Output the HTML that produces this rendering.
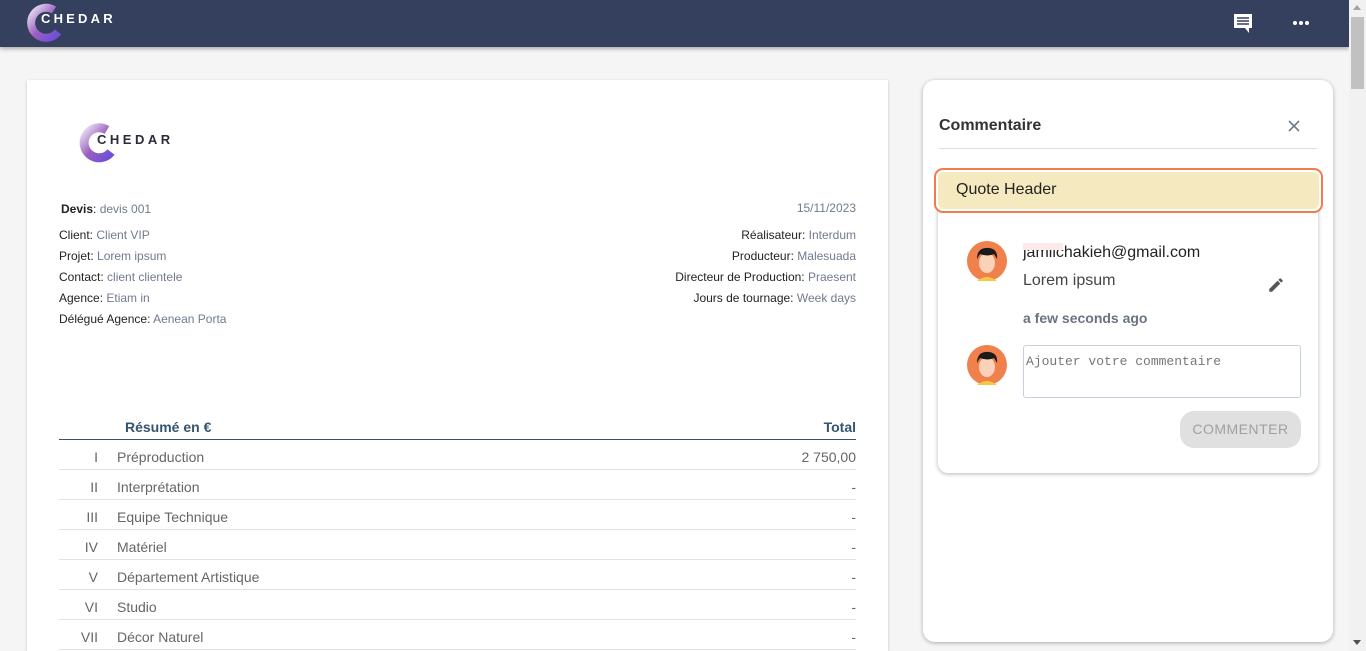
<!DOCTYPE html>
<html style="width:1366px;height:651px;overflow:hidden"><head><meta charset="utf-8"><style>
*{margin:0;padding:0;box-sizing:border-box}
body{width:1366px;height:651px;overflow:hidden;background:#f5f5f5;font-family:"Liberation Sans",Roboto,sans-serif;position:relative}
.hdr{position:absolute;left:0;top:0;width:1349px;height:47px;background:#353f5e;box-shadow:0 2px 4px rgba(0,0,0,.3)}
.sb{position:absolute;right:0;top:0;width:17px;height:651px;background:#f1f1f1}
.sb .th{position:absolute;left:2px;top:17px;width:13px;height:72px;background:#c1c1c1}
.abs{position:absolute}
.doc{position:absolute;left:27px;top:80px;width:861px;height:571px;background:#fff;box-shadow:0 1px 3px rgba(0,0,0,.2);overflow:hidden}
.t{position:absolute;font-size:12px;color:#222;white-space:nowrap}
.t span{color:#707b8c}
.r{text-align:right}
.row{position:absolute;left:32px;width:797px;height:30px;border-bottom:1px solid #e2e2e2;font-size:14px;color:#666}
.row .n{position:absolute;right:758px;top:9px}
.row .l{position:absolute;left:58px;top:9px}
.row .v{position:absolute;right:0;top:9px}
.panel{position:absolute;left:923px;top:80px;width:410px;height:562px;background:#fff;border-radius:12px;box-shadow:0 1px 4px rgba(0,0,0,.3)}
</style></head><body>
<div class="hdr">
<svg class="abs" style="left:24px;top:2px" width="44" height="42" viewBox="0 0 44 42"><defs><linearGradient id="g" x1="0" y1="0" x2="1" y2="1"><stop offset="0" stop-color="#e8e4f2"/><stop offset=".5" stop-color="#9b5fc0"/><stop offset="1" stop-color="#6a4fd8"/></linearGradient></defs><path d="M30 8 A15 15 0 1 0 34 30" fill="none" stroke="url(#g)" stroke-width="8"/></svg>
<div class="abs" style="left:41px;top:11px;color:#fff;font-weight:bold;font-size:13px;letter-spacing:3.2px">CHEDAR</div>
<svg class="abs" style="left:1233px;top:14px" width="20" height="20" viewBox="0 0 20 20"><path d="M1 0h18v14h-3v5l-4-5H1z" fill="#fff"/><path d="M4 4h12M4 7h12M4 10h12" stroke="#353f5e" stroke-width="1.6"/></svg>
<div class="abs" style="left:1293px;top:21px;width:16px;display:flex;justify-content:space-between"><i style="width:4px;height:4px;border-radius:2px;background:#fff"></i><i style="width:4px;height:4px;border-radius:2px;background:#fff"></i><i style="width:4px;height:4px;border-radius:2px;background:#fff"></i></div>
</div>
<div class="sb"><div class="abs" style="left:4px;top:5px;border:4px solid transparent;border-bottom:5px solid #a3a3a3;border-top:0"></div><div class="th"></div><div class="abs" style="left:4px;top:640px;border:4px solid transparent;border-top:5px solid #505050;border-bottom:0"></div></div>

<div class="doc">
<svg class="abs" style="left:50px;top:41px" width="44" height="44" viewBox="0 0 44 42"><path d="M30 8 A15 15 0 1 0 34 30" fill="none" stroke="url(#g)" stroke-width="9"/></svg>
<div class="abs" style="left:70px;top:52px;color:#2a2a3a;font-weight:bold;font-size:13px;letter-spacing:3.5px">CHEDAR</div>
<div class="t" style="left:34px;top:122px"><b>Devis</b>: <span>devis 001</span></div>
<div class="t" style="left:32px;top:148px">Client: <span>Client VIP</span></div>
<div class="t" style="left:32px;top:169px">Projet: <span>Lorem ipsum</span></div>
<div class="t" style="left:32px;top:190px">Contact: <span>client clientele</span></div>
<div class="t" style="left:32px;top:211px">Agence: <span>Etiam in</span></div>
<div class="t" style="left:32px;top:232px">Délégué Agence: <span>Aenean Porta</span></div>
<div class="t r" style="right:32px;top:121px"><span>15/11/2023</span></div>
<div class="t r" style="right:32px;top:148px">Réalisateur: <span>Interdum</span></div>
<div class="t r" style="right:32px;top:169px">Producteur: <span>Malesuada</span></div>
<div class="t r" style="right:32px;top:190px">Directeur de Production: <span>Praesent</span></div>
<div class="t r" style="right:32px;top:211px">Jours de tournage: <span>Week days</span></div>
<div class="abs" style="left:32px;top:330px;width:797px;height:30px;border-bottom:1px solid #35546e;font-size:14px;font-weight:bold;color:#35546e"><span class="abs" style="left:66px;top:9px">Résumé en €</span><span class="abs" style="right:0;top:9px">Total</span></div>
<div class="row" style="top:360px"><span class="n">I</span><span class="l">Préproduction</span><span class="v">2 750,00</span></div>
<div class="row" style="top:390px"><span class="n">II</span><span class="l">Interprétation</span><span class="v">-</span></div>
<div class="row" style="top:420px"><span class="n">III</span><span class="l">Equipe Technique</span><span class="v">-</span></div>
<div class="row" style="top:450px"><span class="n">IV</span><span class="l">Matériel</span><span class="v">-</span></div>
<div class="row" style="top:480px"><span class="n">V</span><span class="l">Département Artistique</span><span class="v">-</span></div>
<div class="row" style="top:510px"><span class="n">VI</span><span class="l">Studio</span><span class="v">-</span></div>
<div class="row" style="top:540px"><span class="n">VII</span><span class="l">Décor Naturel</span><span class="v">-</span></div>
</div>

<div class="panel">
<div class="abs" style="left:16px;top:37px;font-size:16px;font-weight:bold;color:#333">Commentaire</div>
<svg class="abs" style="left:365px;top:40px" width="12" height="12" viewBox="0 0 12 12"><path d="M1 1L11 11M11 1L1 11" stroke="#6b7a8f" stroke-width="1.6"/></svg>
<div class="abs" style="left:16px;top:68px;width:378px;height:1px;background:#ddd"></div>
<div class="abs" style="left:15px;top:104px;width:380px;height:289px;background:#fff;border-radius:10px;box-shadow:0 1px 4px rgba(0,0,0,.3)"></div>
<div class="abs" style="left:11px;top:88px;width:389px;height:45px;border:2.5px solid #f47a4a;border-radius:9px;background:#fff;padding:2px"><div style="background:#f5e9c0;height:100%;border-radius:6px;font-size:16px;color:#222;padding:9px 0 0 18px">Quote Header</div></div>
<svg class="abs" style="left:44px;top:161px" width="40" height="40" viewBox="0 0 40 40"><circle cx="20" cy="20" r="20" fill="#f0804c"/><path d="M10 40q10-8 20 0" fill="#f5c842"/><ellipse cx="20" cy="22" rx="8" ry="10" fill="#f9d2b8"/><path d="M10 18q0-12 12-11 9 1 8 11l-3-5q-6 3-14 0z" fill="#1a1a1a"/></svg>
<svg class="abs" style="left:44px;top:265px" width="40" height="40" viewBox="0 0 40 40"><circle cx="20" cy="20" r="20" fill="#f0804c"/><path d="M10 40q10-8 20 0" fill="#f5c842"/><ellipse cx="20" cy="22" rx="8" ry="10" fill="#f9d2b8"/><path d="M10 18q0-12 12-11 9 1 8 11l-3-5q-6 3-14 0z" fill="#1a1a1a"/></svg>
<div class="abs" style="left:100px;top:164px;font-size:16px;color:#222">jamilchakieh@gmail.com</div>
<div class="abs" style="left:100px;top:163px;width:40px;height:7px;background:#fbeaea"></div>
<div class="abs" style="left:100px;top:192px;font-size:16px;color:#444">Lorem ipsum</div>
<svg class="abs" style="left:344px;top:196px" width="18" height="18" viewBox="0 0 24 24"><path d="M3 17.25V21h3.75L17.81 9.94l-3.75-3.75L3 17.25zM20.71 7.04a1 1 0 000-1.41l-2.34-2.34a1 1 0 00-1.41 0l-1.83 1.83 3.75 3.75 1.83-1.83z" fill="#555"/></svg>
<div class="abs" style="left:100px;top:230px;font-size:14px;font-weight:bold;color:#6b7280">a few seconds ago</div>
<div class="abs" style="left:100px;top:265px;width:278px;height:53px;border:1px solid #c5d0de;border-radius:3px;font-family:'Liberation Mono',monospace;font-size:13px;color:#777;padding:8px 2px">Ajouter votre commentaire</div>
<div class="abs" style="left:257px;top:331px;width:121px;height:37px;border-radius:14px;background:#e0e0e0;color:#a0a0a0;font-size:14px;text-align:center;line-height:37px;letter-spacing:.5px">COMMENTER</div>
</div>
</body></html>
